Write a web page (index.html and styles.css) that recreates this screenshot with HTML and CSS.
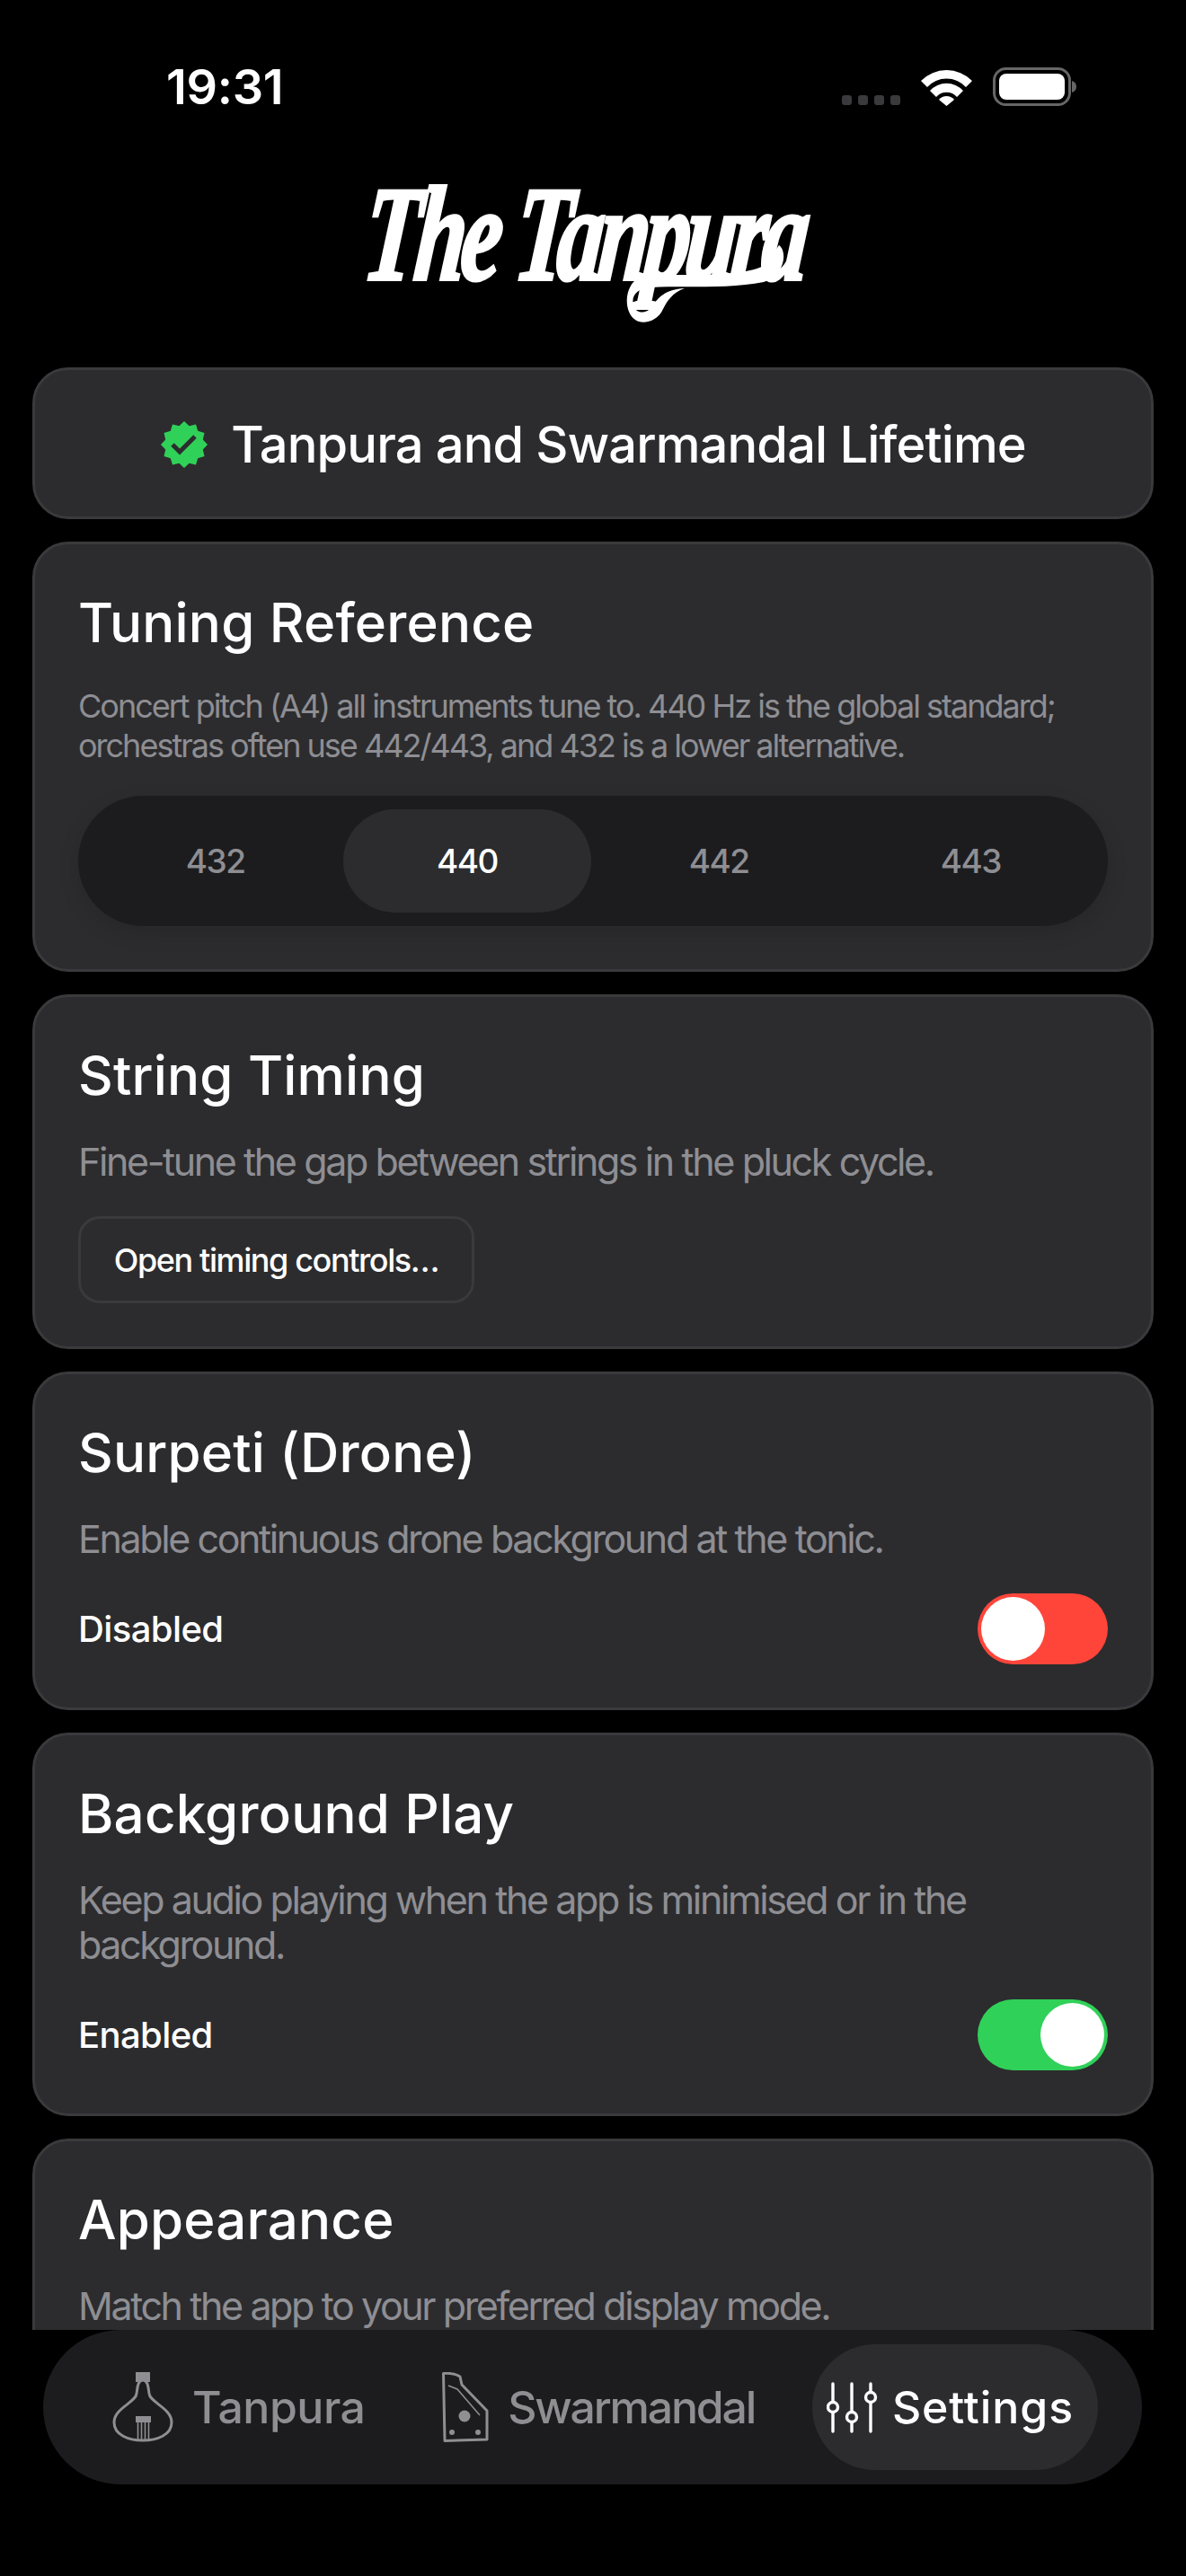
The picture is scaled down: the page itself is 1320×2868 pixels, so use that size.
FILE: index.html
```html
<!DOCTYPE html>
<html lang="en">
<head>
    <meta charset="UTF-8">
    <meta name="viewport" content="width=device-width, initial-scale=1.0">
    <title>The Tanpura - Settings</title>
    <link rel="stylesheet" href="styles.css">
</head>
<body>
<div class="screen">

    <!-- Status bar -->
    <div class="status-bar">
        <span class="time">19:31</span>
        <div class="status-icons">
            <div class="signal"><i></i><i></i><i></i><i></i></div>
            <svg class="wifi" width="57" height="42" viewBox="0 0 57 42" fill="#fff">
                <path d="M0 14 A40 40 0 0 1 57 14 L50 21 A29 29 0 0 0 7 21 Z"/>
                <path d="M10 25 A25 25 0 0 1 47 25 L40 32 A15 15 0 0 0 17 32 Z"/>
                <path d="M20 35 A11 11 0 0 1 37 35 L28.5 42 Z"/>
            </svg>
            <svg class="battery" width="93" height="43" viewBox="0 0 93 43">
                <rect x="1.5" y="1.5" width="84" height="40" rx="13" fill="none" stroke="#666" stroke-width="3"/>
                <rect x="7" y="7" width="73" height="29" rx="8" fill="#fff"/>
                <path d="M88 15 C91 16 93 18 93 21.5 C93 25 91 27 88 28 Z" fill="#666"/>
            </svg>
        </div>
    </div>

    <!-- Logo: real text with the swash laid over it -->
    <div class="logo">
        <span class="logo-text">The Tanpura</span>
        <svg class="logo-swash" width="560" height="180" viewBox="0 0 560 180" fill="#fff">
            <path d="M487 83 C497 90 493 118 470 124 C430 132 380 128 345 130 C330 131 322 138 325 150 C328 160 340 160 347 150 C352 142 360 132 382 131 C368 136 362 146 358 154 C352 168 335 172 327 166 C315 158 315 135 325 124 C335 114 350 116 370 116 C410 116 450 116 470 106 C480 100 480 92 487 83 Z"/>
        </svg>
    </div>

    <div class="settings-list">

        <div class="card card-plan">
            <svg width="54" height="54" viewBox="0 0 54 54">
                <polygon fill="#30d158" points="27,1 32.6,6.2 40,4.5 42.2,11.8 49.5,14 47.8,21.4 53,27 47.8,32.6 49.5,40 42.2,42.2 40,49.5 32.6,47.8 27,53 21.4,47.8 14,49.5 11.8,42.2 4.5,40 6.2,32.6 1,27 6.2,21.4 4.5,14 11.8,11.8 14,4.5 21.4,6.2"/>
                <polyline points="14,27 22,35 39,18" fill="none" stroke="#2c2c2e" stroke-width="5"/>
            </svg>
            <span class="plan-name">Tanpura and Swarmandal Lifetime</span>
        </div>

        <div class="card">
            <h2 class="card-title">Tuning Reference</h2>
            <p class="card-desc card-desc-small">Concert pitch (A4) all instruments tune to. 440 Hz is the global standard; orchestras often use 442/443, and 432 is a lower alternative.</p>
            <div class="segments">
                <div class="segment">432</div>
                <div class="segment active">440</div>
                <div class="segment">442</div>
                <div class="segment">443</div>
            </div>
        </div>

        <div class="card">
            <h2 class="card-title">String Timing</h2>
            <p class="card-desc">Fine-tune the gap between strings in the pluck cycle.</p>
            <button class="outline-btn">Open timing controls…</button>
        </div>

        <div class="card">
            <h2 class="card-title">Surpeti (Drone)</h2>
            <p class="card-desc">Enable continuous drone background at the tonic.</p>
            <div class="toggle-row">
                <span class="toggle-label">Disabled</span>
                <div class="toggle toggle-off"><div class="knob"></div></div>
            </div>
        </div>

        <div class="card">
            <h2 class="card-title">Background Play</h2>
            <p class="card-desc">Keep audio playing when the app is minimised or in the background.</p>
            <div class="toggle-row">
                <span class="toggle-label">Enabled</span>
                <div class="toggle toggle-on"><div class="knob"></div></div>
            </div>
        </div>

        <div class="card">
            <h2 class="card-title">Appearance</h2>
            <p class="card-desc">Match the app to your preferred display mode.</p>
        </div>
    </div>

    <!-- Tab bar -->
    <nav class="tab-bar">
        <div class="tab">
            <svg width="68" height="78" viewBox="0 0 68 78" fill="none" stroke="#8e8e93" stroke-width="3">
                <path d="M26 0 H42 V11 L37 11 C35 7 33 7 31 11 L26 11 Z" fill="#8e8e93" stroke="none"/>
                <path d="M34 9 C28 9 28 18 27 24 C26 34 2 40 2 56 C2 70 18 76 34 76 C50 76 66 70 66 56 C66 40 42 34 41 24 C40 18 40 9 34 9 Z"/>
                <rect x="26" y="49" width="17" height="7" fill="#8e8e93" stroke="none"/>
                <path d="M28.5 56 V77 M32.5 56 V77 M36.5 56 V77 M40.5 56 V77" stroke-width="1.6"/>
            </svg>
            <span>Tanpura</span>
        </div>
        <div class="tab tab-swarmandal">
            <svg width="52" height="78" viewBox="0 0 52 78" fill="none" stroke="#8e8e93" stroke-width="3">
                <path d="M1.5 1.5 C8 1 15 2 20 5 L22 14 L50 43 V75 L3 76.5 Z" stroke-linejoin="round"/>
                <path d="M7 15 L17 19 L42 48" stroke-width="1.5"/>
                <circle cx="25" cy="49" r="6.5" fill="#8e8e93" stroke="none"/>
                <circle cx="11" cy="67" r="3" fill="#8e8e93" stroke="none"/>
                <circle cx="40" cy="67" r="3" fill="#8e8e93" stroke="none"/>
            </svg>
            <span>Swarmandal</span>
        </div>
        <div class="tab active">
            <svg width="57" height="57" viewBox="0 0 57 57" fill="#2c2c2e" stroke="#fff" stroke-width="3.4" stroke-linecap="round">
                <path d="M7 2 V55 M28 2 V55 M49 2 V55"/>
                <circle cx="7" cy="28" r="5.5"/>
                <circle cx="28" cy="39" r="5.5"/>
                <circle cx="49" cy="17" r="5.5"/>
            </svg>
            <span>Settings</span>
        </div>
    </nav>
</div>
</body>
</html>
```

FILE: styles.css
```css
* {
    box-sizing: border-box;
}

body {
    margin: 0;
    padding: 0;
    background-color: #000;
    color: #fff;
    font-family: "Inter", "Noto Sans", sans-serif;
}

.screen {
    width: 1320px;
    height: 2868px;
    display: flex;
    flex-direction: column;
    overflow: hidden;
}

/* Status bar */
.status-bar {
    display: flex;
    justify-content: space-between;
    align-items: center;
    padding: 75px 122px 0 185px;
}

.time {
    font-size: 54px;
    font-weight: 600;
    line-height: 43px;
    letter-spacing: -0.3px;
}

.status-icons {
    display: flex;
    align-items: flex-end;
    gap: 23px;
}

.signal {
    display: flex;
    gap: 7px;
    margin-bottom: 1px;
}

.signal i {
    width: 11px;
    height: 11px;
    border-radius: 3px;
    background-color: #3a3a3c;
}

/* Logo */
.logo {
    position: relative;
    width: 560px;
    height: 180px;
    margin: 72px auto 39px;
}

.logo-text {
    display: inline-block;
    margin-left: 20px;
    font-family: "Liberation Serif", serif;
    font-size: 150px;
    font-weight: 700;
    font-style: italic;
    line-height: 140px;
    letter-spacing: -8px;
    white-space: nowrap;
    -webkit-text-stroke: 4px #fff;
    transform: scaleX(0.68) skewX(-8deg);
    transform-origin: 0 100%;
}

.logo-swash {
    position: absolute;
    left: 0;
    top: 0;
}

/* Cards */
.settings-list {
    flex: 1;
    min-height: 0;
    overflow: hidden;
    padding: 0 36px;
    display: flex;
    flex-direction: column;
    gap: 25px;
}

.card {
    flex-shrink: 0;
    padding: 48px;
    background-color: #2c2c2e;
    border: 3px solid #3a3a3c;
    border-radius: 40px;
}

.card-plan {
    height: 169px;
    padding: 2px 0 0;
    display: flex;
    justify-content: center;
    align-items: center;
    gap: 25px;
}

.plan-name {
    font-size: 56px;
    font-weight: 500;
    letter-spacing: -0.85px;
}

.card-title {
    margin: 0 0 32px;
    font-size: 60px;
    font-weight: 500;
    line-height: 78px;
    letter-spacing: 0.2px;
}

.card-desc {
    margin: 0 0 36px;
    font-size: 43px;
    line-height: 50px;
    letter-spacing: -2.4px;
    color: #8e8e93;
}

.card-desc-small {
    margin-bottom: 34px;
    font-size: 36px;
    line-height: 44px;
    letter-spacing: -2px;
}

/* Tuning segments */
.segments {
    display: grid;
    grid-template-columns: repeat(4, 1fr);
    gap: 5px;
    padding: 15px;
    border-radius: 73px;
    background-color: #1c1c1e;
    box-shadow: 0 8px 24px rgba(0, 0, 0, 0.12);
}

.segment {
    height: 115px;
    display: flex;
    justify-content: center;
    align-items: center;
    border-radius: 58px;
    font-size: 37px;
    font-weight: 500;
    letter-spacing: -1.5px;
    color: #8e8e93;
}

.segment.active {
    background-color: #2c2c2e;
    color: #fff;
}

.outline-btn {
    display: block;
    width: 441px;
    height: 97px;
    padding: 0;
    background-color: #2c2c2e;
    border: 3px solid #3a3a3c;
    border-radius: 24px;
    color: #fff;
    font-family: inherit;
    font-size: 36px;
    font-weight: 500;
    letter-spacing: -1.4px;
}

/* Toggle rows */
.toggle-row {
    display: flex;
    justify-content: space-between;
    align-items: center;
}

.toggle-label {
    font-size: 40px;
    font-weight: 500;
    letter-spacing: -0.6px;
}

.toggle {
    width: 145px;
    height: 79px;
    padding: 4px;
    display: flex;
    border-radius: 40px;
}

.toggle-off {
    background-color: #ff453a;
}

.toggle-on {
    background-color: #30d158;
    justify-content: flex-end;
}

.knob {
    width: 71px;
    height: 71px;
    border-radius: 50%;
    background-color: #fff;
}

/* Tab bar */
.tab-bar {
    flex-shrink: 0;
    height: 172px;
    margin: 0 49px 102px 48px;
    padding: 16px 49px 16px 61px;
    display: flex;
    justify-content: space-between;
    align-items: stretch;
    border-radius: 86px;
    background-color: #1c1c1e;
}

.tab {
    display: flex;
    align-items: center;
    gap: 21px;
    padding: 0 28px 0 16px;
    border-radius: 70px;
    font-size: 50px;
    font-weight: 500;
    letter-spacing: -0.5px;
    color: #8e8e93;
}

.tab-swarmandal {
    padding-right: 22px;
    letter-spacing: -2.2px;
}

.tab.active {
    gap: 16px;
    padding-right: 27px;
    background-color: #2c2c2e;
    color: #fff;
    letter-spacing: 0.9px;
}
```
